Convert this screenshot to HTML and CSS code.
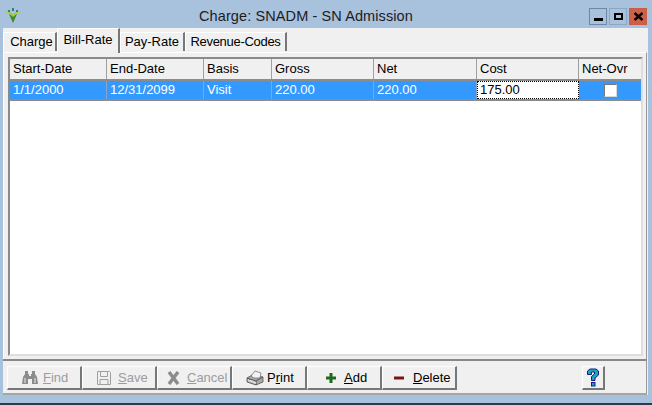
FILE: index.html
```html
<!DOCTYPE html>
<html lang="en">
<head>
    <meta charset="UTF-8">
    <title>Charge: SNADM - SN Admission</title>
    <link rel="stylesheet" href="styles.css">
</head>
<body>
    <div class="window">
        <div class="titlebar">
            <svg class="app-icon" width="18" height="18" viewBox="0 0 18 18">
                <path d="M5 8 L9 17 L13 8 L9 10 Z" fill="#3f8a2e"/>
                <path d="M1 6 L6 8 L9 11 L12 8 L17 6 L12 6 L9 8 L6 6 Z" fill="#a5cc3a"/>
                <rect x="8" y="2" width="2" height="3" fill="#2f7f86"/>
                <rect x="4" y="4" width="2" height="2" fill="#2f7f86"/>
                <rect x="12" y="4" width="2" height="2" fill="#2f7f86"/>
            </svg>
            <div class="title">Charge: SNADM - SN Admission</div>
            <div class="win-buttons">
                <div class="win-btn"><span class="glyph-min"></span></div>
                <div class="win-btn win-btn-max"><span class="glyph-max"></span></div>
                <div class="win-btn win-btn-close">
                    <svg width="11" height="9" viewBox="0 0 11 9"><path d="M1.5 1 L9.5 8 M9.5 1 L1.5 8" stroke="#000" stroke-width="2.4"/></svg>
                </div>
            </div>
        </div>

        <div class="client">
            <div class="tabs">
                <div class="tab tab-charge">Charge</div>
                <div class="tab tab-bill tab-active">Bill-Rate</div>
                <div class="tab tab-pay">Pay-Rate</div>
                <div class="tab tab-rev">Revenue-Codes</div>
            </div>

            <div class="panel">
                <div class="grid">
                    <div class="grid-row grid-head">
                        <div class="cell c1">Start-Date</div>
                        <div class="cell c2">End-Date</div>
                        <div class="cell c3">Basis</div>
                        <div class="cell c4">Gross</div>
                        <div class="cell c5">Net</div>
                        <div class="cell c6">Cost</div>
                        <div class="cell c7">Net-Ovr</div>
                    </div>
                    <div class="grid-row grid-selected">
                        <div class="cell c1">1/1/2000</div>
                        <div class="cell c2">12/31/2099</div>
                        <div class="cell c3">Visit</div>
                        <div class="cell c4">220.00</div>
                        <div class="cell c5">220.00</div>
                        <div class="cell c6 cell-edit">175.00</div>
                        <div class="cell c7 cell-check"><span class="checkbox"></span></div>
                    </div>
                </div>
            </div>

            <div class="toolbar">
                <div class="btn btn-find is-disabled">
                    <svg width="16" height="14" viewBox="0 0 16 14">
                        <path d="M3 0 H6 V3 H7 V5 H9 V3 H10 V0 H13 V3 L15 6 L16 13 H10 V8 H6 V13 H0 L1 6 L3 3 Z" fill="#8c8c8c"/>
                        <path d="M2 7 H4 V12 H2 Z M12 7 H14 V12 H12 Z" fill="#bcbcbc"/>
                    </svg>
                    <span><u>F</u>ind</span>
                </div>
                <div class="btn btn-save is-disabled">
                    <svg width="14" height="14" viewBox="0 0 14 14"><path d="M.5 .5 H12.5 L13.5 1.5 V13.5 H.5 Z M3.5 .5 V5.5 H10.5 V.5 M3 13.5 V8.5 H11 V13.5" fill="none" stroke="#a0a0a0"/></svg>
                    <span><u>S</u>ave</span>
                </div>
                <div class="btn btn-cancel is-disabled">
                    <svg width="13" height="14" viewBox="0 0 13 14"><path d="M2 1 L11 13 M11 1 L2 13" stroke="#8c8c8c" stroke-width="3.4"/></svg>
                    <span><u>C</u>ancel</span>
                </div>
                <div class="btn btn-print">
                    <svg width="18" height="16" viewBox="0 0 18 16">
                        <path d="M1 8 L6 5 L17 7 V12 L10 15 L1 12 Z" fill="#a9a9a9" stroke="#444" stroke-width=".7"/>
                        <path d="M5 6 L9 1 L15 3 L14 8 L8 8 Z" fill="#f2f2f2" stroke="#666" stroke-width=".7"/>
                        <path d="M1 8 L10 11 V15 M10 11 L17 7" fill="none" stroke="#444" stroke-width=".8"/>
                        <path d="M2 9 L10 12 V14 L2 11 Z" fill="#dcdcdc"/>
                        <rect x="3" y="9" width="2" height="1" fill="#3c9a3c"/>
                    </svg>
                    <span>P<u>r</u>int</span>
                </div>
                <div class="btn btn-add">
                    <svg width="12" height="12" viewBox="0 0 12 12"><path d="M6 1 V11 M1 6 H11" stroke="#1d6b1d" stroke-width="3"/></svg>
                    <span><u>A</u>dd</span>
                </div>
                <div class="btn btn-delete">
                    <svg width="12" height="12" viewBox="0 0 12 12"><path d="M1 6 H11" stroke="#7d1414" stroke-width="3"/></svg>
                    <span><u>D</u>elete</span>
                </div>
                <div class="btn btn-help">
                    <svg width="14" height="19" viewBox="0 0 14 19">
                        <path d="M1.5 6.5 V3 L4 1 H10 L12.5 3 V7 L9 10 V12.5 H5.5 V8.5 L8.5 6 V4 H5.5 V6.5 Z" fill="#14a8b8" stroke="#1b1b8f" stroke-width="1"/>
                        <rect x="5.5" y="14.5" width="3.5" height="3.5" fill="#14a8b8" stroke="#1b1b8f" stroke-width="1"/>
                    </svg>
                </div>
            </div>
        </div>
    </div>
</body>
</html>
```

FILE: styles.css
```css
html, body {
    margin: 0;
    padding: 0;
}

body {
    width: 652px;
    height: 405px;
    overflow: hidden;
    font-family: "Liberation Sans", Arial, sans-serif;
    font-size: 13px;
    color: #000;
}

.window {
    width: 652px;
    height: 405px;
    box-sizing: border-box;
    background: #a8c1dc;
    border-bottom: 2px solid #2c3a4a;
    padding: 0 4px 8px 3px;
    display: flex;
    flex-direction: column;
}

.titlebar {
    height: 28px;
    flex: none;
    display: flex;
    align-items: flex-start;
    position: relative;
}

.app-icon {
    margin-left: 1px;
    margin-top: 6px;
}

.title {
    position: absolute;
    left: 0;
    right: 39px;
    top: 7px;
    text-align: center;
    font-size: 14.5px;
    line-height: 18px;
    color: #1c1c1c;
    letter-spacing: .1px;
}

.win-buttons {
    margin-left: auto;
    display: flex;
    gap: 2px;
    margin-top: 8px;
    margin-right: 1px;
}

.win-btn {
    width: 18px;
    height: 17px;
    box-sizing: border-box;
    border: 1px solid #6f87a6;
    display: flex;
    align-items: center;
    justify-content: center;
}

.win-btn-max {
    border-color: #8da6c4;
}

.win-btn-close {
    border-color: #c4604a;
    background: #cf6048;
}

.glyph-min {
    display: block;
    width: 9px;
    height: 3px;
    margin-top: 5px;
    background: #000;
}

.glyph-max {
    display: block;
    box-sizing: border-box;
    width: 9px;
    height: 7px;
    border: 2px solid #000;
}

.client {
    flex: 1;
    background: #f0f0f0;
    display: flex;
    flex-direction: column;
    min-height: 0;
}

.tabs {
    height: 24px;
    flex: none;
    display: flex;
    align-items: flex-end;
}

.tab {
    height: 19px;
    box-sizing: border-box;
    line-height: 17px;
    text-align: center;
    background: #f0f0f0;
    border-top: 1px solid #fff;
    border-left: 1px solid #fff;
    border-right: 2px solid #777;
    margin-bottom: 1px;
}

.tab-charge { width: 54px; padding-left: 4px; }
.tab-bill { width: 63px; }
.tab-pay { width: 65px; }
.tab-rev { width: 102px; letter-spacing: -.3px; }

.tab-active {
    height: 25px;
    padding-top: 2px;
    margin-bottom: -1px;
    position: relative;
    z-index: 1;
}

.panel {
    flex: 1;
    min-height: 0;
    margin-right: 1px;
    border-top: 1px solid #fff;
    border-left: 1px solid #fff;
    border-right: 1px solid #999;
    padding: 4px 3px 3px 4px;
    display: flex;
}

.grid {
    flex: 1;
    background: #fff;
    border: 2px solid #8a8a8a;
    border-right-color: #dedede;
    border-bottom-color: #dedede;
    box-sizing: border-box;
}

.grid-row {
    display: flex;
    box-sizing: border-box;
    border-bottom: 2px solid #8c8c8c;
}

.grid-head {
    height: 22px;
    line-height: 20px;
    background: #f0f0f0;
}

.grid-selected {
    height: 20px;
    line-height: 18px;
    background: #3399ff;
    color: #fff;
}

.cell {
    box-sizing: border-box;
    padding-left: 3px;
    border-right: 1px solid #a0a0a0;
    white-space: nowrap;
    overflow: hidden;
}

.grid-selected .cell {
    border-right-color: #8aa6c4;
}

.c1 { width: 97px; }
.c2 { width: 97px; }
.c3 { width: 68px; }
.c4 { width: 102px; }
.c5 { width: 103px; }
.c6 { width: 102px; }
.c7 { flex: 1; border-right: 0; }

.grid-selected .cell-edit {
    background: #fff;
    color: #000;
    border: 1px dotted #000;
    padding-left: 2px;
    line-height: 16px;
}

.cell-check {
    display: flex;
    align-items: center;
    justify-content: center;
    padding: 0;
}

.checkbox {
    display: block;
    box-sizing: border-box;
    width: 13px;
    height: 13px;
    background: #fff;
    border: 1px solid #d8d8d8;
    border-top-color: #777;
    border-left-color: #777;
}

.toolbar {
    height: 36px;
    flex: none;
    box-sizing: border-box;
    margin-right: 1px;
    border-top: 2px solid #888;
    border-right: 1px solid #999;
    border-bottom: 2px solid #a6a6a6;
    padding: 5px 0 0 4px;
    display: flex;
    align-items: flex-start;
}

.btn {
    width: 75px;
    height: 24px;
    box-sizing: border-box;
    background: #f0f0f0;
    border-top: 1px solid #fff;
    border-left: 1px solid #fff;
    border-right: 2px solid #777;
    border-bottom: 2px solid #777;
    display: flex;
    align-items: center;
}

.is-disabled {
    color: #9c9c9c;
}

.btn-find { padding-left: 14px; gap: 5px; }
.btn-save { padding-left: 14px; gap: 7px; }
.btn-cancel { padding-left: 9px; gap: 7px; }
.btn-print { padding-left: 13px; gap: 3px; }
.btn-add { padding-left: 17px; gap: 7px; }
.btn-delete { padding-left: 10px; gap: 8px; }

.btn-help {
    width: 23px;
    margin-left: 125px;
    justify-content: center;
}
```
